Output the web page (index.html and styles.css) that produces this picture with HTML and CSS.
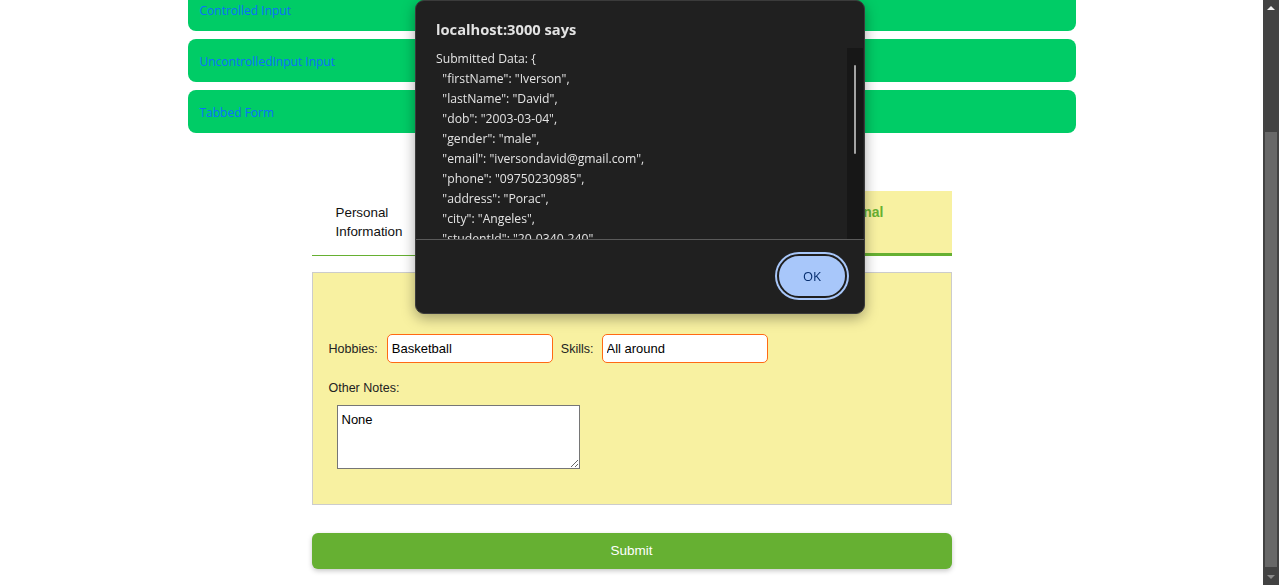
FILE: index.html
```html
<!DOCTYPE html>
<html lang="en">
<head>
<meta charset="utf-8">
<title>Forms</title>
<link rel="stylesheet" href="styles.css">
</head>
<body>
<div class="page">
  <nav class="links">
    <a class="link-card" href="#">Controlled Input</a>
    <a class="link-card" href="#">UncontrolledInput Input</a>
    <a class="link-card" href="#">Tabbed Form</a>
  </nav>

  <section class="tabbed">
    <div class="tabs">
      <div class="tab">Personal Information</div>
      <div class="tab">Academic Information</div>
      <div class="tab">Contact Information</div>
      <div class="tab active">Additional</div>
    </div>

    <div class="panel">
      <div class="row">
        <label class="lbl">Hobbies:</label>
        <input class="field" type="text" value="Basketball">
        <label class="lbl">Skills:</label>
        <input class="field" type="text" value="All around">
      </div>
      <div class="notes-label">Other Notes:</div>
      <textarea class="notes">None</textarea>
    </div>

    <button class="submit">Submit</button>
  </section>
</div>

<div class="dialog">
  <div class="dlg-title">localhost:3000 says</div>
  <div class="dlg-body">
    <div class="dlg-text">Submitted Data: {
  "firstName": "Iverson",
  "lastName": "David",
  "dob": "2003-03-04",
  "gender": "male",
  "email": "iversondavid@gmail.com",
  "phone": "09750230985",
  "address": "Porac",
  "city": "Angeles",
  "studentId": "20-0340-240",
  "course": "BSIT",
  "hobbies": "Basketball",
  "skills": "All around",
  "notes": "None"
}</div>
    <div class="dlg-scroll"><div class="dlg-thumb"></div></div>
  </div>
  <div class="dlg-foot">
    <button class="ok">OK</button>
  </div>
</div>

<div class="vscroll">
  <div class="arrow up"></div>
  <div class="thumb"></div>
  <div class="arrow down"></div>
</div>
</body>
</html>
```

FILE: styles.css
```css
* { box-sizing: border-box; }
html, body { margin: 0; padding: 0; height: 585px; overflow: hidden; background: #fff; }
body { font-family: "Liberation Sans", Arial, sans-serif; }

.page { width: 1263px; }

.links {
  width: 888px;
  margin: -12px auto 0;
  display: flex;
  flex-direction: column;
  gap: 8px;
}
.link-card {
  height: 43px;
  display: flex;
  align-items: center;
  padding: 1px 12px 0;
  background: #00cc66;
  border-radius: 8px;
  color: #0d6efd;
  text-decoration: none;
  font-family: "Open Sans", "Noto Sans", sans-serif;
  font-size: 12px;
}

.tabbed {
  width: 640px;
  margin: 58px auto 0;
}
.tabs {
  display: flex;
  align-items: flex-start;
  height: 65px;
  border-bottom: 1px solid #66b032;
}
.tab {
  width: 160px;
  height: 64px;
  padding: 12px 24px 0;
  font-size: 13.4px;
  line-height: 19px;
  color: #111;
}
.tab.active {
  height: 65px;
  background: #f8f1a1;
  border-bottom: 3px solid #66b032;
  color: #66b032;
  font-weight: bold;
  font-size: 13.9px;
}

.panel {
  margin-top: 16px;
  height: 233px;
  background: #f8f1a1;
  border: 1px solid #cccccc;
  padding: 61px 16px 0;
  font-size: 12.5px;
  color: #222;
}
.row {
  display: flex;
  align-items: center;
  gap: 8px;
}
.lbl { white-space: nowrap; }
.lbl:first-child { margin-right: 1px; }
.field {
  width: 166px;
  height: 29px;
  border: 1px solid #ff6a13;
  border-radius: 5px;
  padding: 0 4px;
  font: 13px "Liberation Sans", Arial, sans-serif;
  color: #000;
  background: #fff;
}
.notes-label { margin-top: 18px; line-height: 15px; }
.notes {
  display: block;
  margin: 9px 0 0 8px;
  width: 243px;
  height: 64px;
  border: 1px solid #767676;
  padding: 6px 4px 5px;
  font: 13px "Liberation Sans", Arial, sans-serif;
  color: #000;
  resize: both;
}

.submit {
  display: block;
  width: 100%;
  height: 36px;
  margin-top: 28px;
  padding: 0 0 1px;
  border: 0;
  border-radius: 6px;
  background: #66b032;
  color: #fff;
  font: 13.5px "Liberation Sans", Arial, sans-serif;
  box-shadow: 0 2px 5px rgba(0,0,0,0.22);
}

/* alert dialog overlay */
.dialog {
  position: fixed;
  left: 415px;
  top: 0;
  width: 450px;
  height: 314px;
  background: #202020;
  border: 1px solid #3b3b3b;
  border-radius: 9px;
  box-shadow: 0 4px 14px rgba(0,0,0,0.35);
  font-family: "Open Sans", "Noto Sans", sans-serif;
  color: #e3e3e3;
  display: flex;
  flex-direction: column;
}
.dlg-title {
  padding: 18px 20px 0 20px;
  height: 47px;
  font-size: 14.7px;
  font-weight: bold;
  line-height: 20px;
}
.dlg-body {
  height: 191px;
  display: flex;
  overflow: hidden;
}
.dlg-text {
  flex: 1;
  padding: 1px 0 0 20px;
  white-space: pre;
  font-size: 12.2px;
  line-height: 20px;
  overflow: hidden;
}
.dlg-scroll {
  width: 16px;
  margin-right: 1px;
  background: #171717;
  position: relative;
}
.dlg-thumb {
  position: absolute;
  left: 7px;
  top: 17px;
  width: 2px;
  height: 89px;
  border-radius: 1px;
  background: #a3a3a3;
}
.dlg-foot {
  flex: 1;
  border-top: 1px solid #5a5a5a;
  display: flex;
  justify-content: flex-end;
  align-items: flex-start;
  padding: 14px 17px 0 0;
}
.ok {
  width: 70px;
  height: 44px;
  border-radius: 22px;
  background: #a8c7fa;
  border: 2px solid #1f1f1f;
  box-shadow: 0 0 0 2px #a8c7fa;
  color: #062e6f;
  font: 500 13px "Open Sans", "Noto Sans", sans-serif;
}

/* browser scrollbar */
.vscroll {
  position: fixed;
  right: 0;
  top: 0;
  width: 16px;
  height: 585px;
  background: #424242;
}
.vscroll .thumb {
  position: absolute;
  left: 2px;
  top: 132px;
  width: 12px;
  height: 435px;
  background: #686868;
}
.vscroll .arrow {
  position: absolute;
  left: 4px;
  width: 0;
  height: 0;
  border-left: 4px solid transparent;
  border-right: 4px solid transparent;
}
.vscroll .up { top: 6px; border-bottom: 4px solid #f0f0f0; }
.vscroll .down { bottom: 6px; border-top: 4px solid #8a8a8a; }
```
